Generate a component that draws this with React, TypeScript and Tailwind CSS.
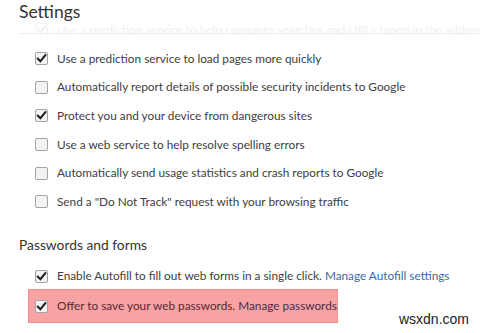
import React from 'react';

const Check = ({ checked, faded }: { checked: boolean; faded?: boolean }) => (
  <span
    className={
      'relative flex h-[13px] w-[13px] shrink-0 items-center justify-center rounded-[2px] border ' +
      (faded ? 'border-[#f2f2f2] bg-white' : 'border-[#a3a3a3] bg-[#f3f3f3]')
    }
  >
    {checked && (
      <svg viewBox="0 0 12 12" className="h-[11px] w-[11px]">
        <path
          d="M2 6.2 L4.8 9 L10.2 2.4"
          fill="none"
          stroke={faded ? '#f0f0f0' : '#1f1f1f'}
          strokeWidth="2.2"
          strokeLinecap="square"
        />
      </svg>
    )}
  </span>
);

const rows: { label: string; checked: boolean }[] = [
  { label: 'Use a prediction service to load pages more quickly', checked: true },
  { label: 'Automatically report details of possible security incidents to Google', checked: false },
  { label: 'Protect you and your device from dangerous sites', checked: true },
  { label: 'Use a web service to help resolve spelling errors', checked: false },
  { label: 'Automatically send usage statistics and crash reports to Google', checked: false },
  { label: 'Send a "Do Not Track" request with your browsing traffic', checked: false },
];

export default function App() {
  return (
    <div
      className="relative h-[333px] w-[480px] overflow-hidden bg-white text-[#404040]"
      style={{ fontFamily: 'Lato, "Open Sans", sans-serif' }}
    >
      <div className="pl-[19px] pt-[1px] text-[17.5px] leading-[22px] text-[#333333]">Settings</div>

      {/* row scrolled under the header */}
      <div className="ml-[18px] h-[11px] overflow-hidden border-b border-[#ededed]">
        <div className="flex items-center gap-[9px] pl-[17px] text-[12px] leading-[13px] text-[#f0f0f0]">
          <Check checked faded />
          <span className="whitespace-nowrap">
            Use a prediction service to help complete searches and URLs typed in the address bar
          </span>
        </div>
      </div>

      <div className="flex flex-col pt-[10px]">
        {rows.map((r, i) => (
          <div key={i} className="flex h-[28.7px] items-center gap-[9px] pl-[35px] text-[11.8px]">
            <Check checked={r.checked} />
            <span className="whitespace-nowrap">{r.label}</span>
          </div>
        ))}
      </div>

      <div className="mt-[19px] pl-[19px] text-[13.8px] leading-[20px] text-[#333333]">Passwords and forms</div>

      <div className="mt-[8px] flex h-[26px] items-center gap-[9px] pl-[35px] text-[11.8px]">
        <Check checked />
        <span className="whitespace-nowrap">
          Enable Autofill to fill out web forms in a single click.{' '}
          <span className="text-[#3b6ba5]">Manage Autofill settings</span>
        </span>
      </div>

      <div className="ml-[28px] flex h-[34px] w-[310px] items-center gap-[9px] border border-[#ef9090] bg-[#f7a3a3] pl-[6px] text-[11.8px] text-[#5a2632]">
        <Check checked />
        <span className="whitespace-nowrap">
          Offer to save your web passwords. <span className="text-[#4e2a4a]">Manage passwords</span>
        </span>
      </div>

      <div
        className="absolute bottom-[3px] right-[11px] text-[14px] text-[#222222]"
        style={{ fontFamily: '"Liberation Sans", sans-serif' }}
      >
        wsxdn.com
      </div>
    </div>
  );
}
